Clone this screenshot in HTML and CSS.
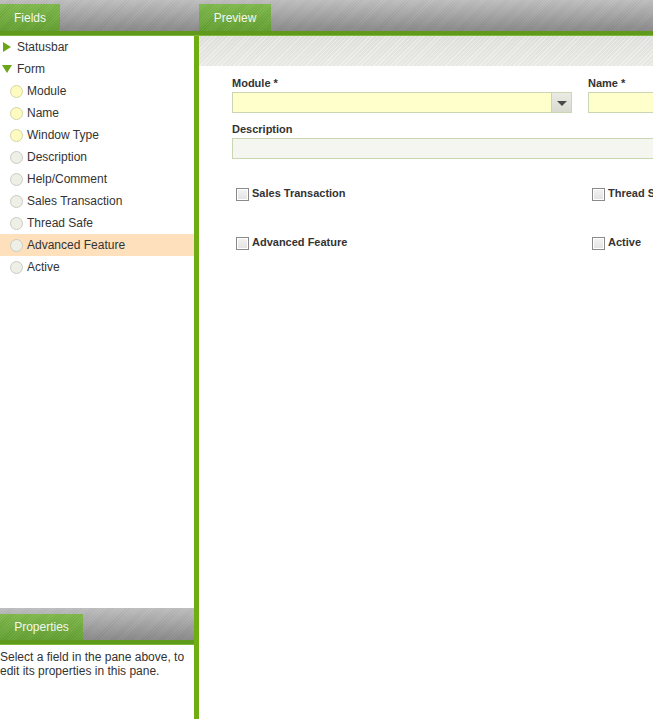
FILE: index.html
```html
<!DOCTYPE html>
<html lang="en">
<head>
    <meta charset="UTF-8">
    <title>Window Designer</title>
    <link rel="stylesheet" href="styles.css">
</head>
<body>
    <div class="topbar">
        <div class="tab tab-fields">Fields</div>
        <div class="tab tab-preview">Preview</div>
    </div>
    <div class="greenline"></div>

    <div class="main">
        <div class="left">
            <ul class="tree">
                <li class="node"><span class="arrow arrow-r"></span>Statusbar</li>
                <li class="node"><span class="arrow arrow-d"></span>Form</li>
                <li class="leaf"><span class="dot req"></span>Module</li>
                <li class="leaf"><span class="dot req"></span>Name</li>
                <li class="leaf"><span class="dot req"></span>Window Type</li>
                <li class="leaf"><span class="dot"></span>Description</li>
                <li class="leaf"><span class="dot"></span>Help/Comment</li>
                <li class="leaf"><span class="dot"></span>Sales Transaction</li>
                <li class="leaf"><span class="dot"></span>Thread Safe</li>
                <li class="leaf selected"><span class="dot"></span>Advanced Feature</li>
                <li class="leaf"><span class="dot"></span>Active</li>
            </ul>
            <div class="props-bar">
                <div class="tab tab-props">Properties</div>
            </div>
            <div class="props-line"></div>
            <div class="props-body">Select a field in the pane above, to edit its properties in this pane.</div>
        </div>

        <div class="splitter"></div>

        <div class="preview">
            <div class="toolband"></div>
            <div class="form">
                <div class="row">
                    <div class="field col1">
                        <label>Module *</label>
                        <div class="input req combo"><span class="combo-btn"></span></div>
                    </div>
                    <div class="field col2">
                        <label>Name *</label>
                        <div class="input req"></div>
                    </div>
                </div>
                <div class="field wide">
                    <label>Description</label>
                    <div class="input"></div>
                </div>
                <div class="checks">
                    <div class="check"><span class="box"></span>Sales Transaction</div>
                    <div class="check"><span class="box"></span>Thread Safe</div>
                    <div class="check"><span class="box"></span>Advanced Feature</div>
                    <div class="check"><span class="box"></span>Active</div>
                </div>
            </div>
        </div>
    </div>
</body>
</html>
```

FILE: styles.css
```css
html, body { margin: 0; padding: 0; }
body { font-family: "Liberation Sans", Arial, sans-serif; font-size: 12px; color: #333; width: 653px; height: 719px; overflow: hidden; background: #fff; }

.topbar, .props-bar {
    display: flex; align-items: flex-end; height: 31px;
    background: repeating-linear-gradient(135deg, rgba(255,255,255,0.03) 0 1px, rgba(0,0,0,0.03) 1px 2px),
                linear-gradient(#c0c0c0, #8a8a8a);
}
.tab {
    height: 27px; line-height: 28px; color: #f4f8ee; font-size: 12px; text-align: center;
    background: repeating-linear-gradient(135deg, rgba(255,255,255,0.04) 0 1px, rgba(0,0,0,0.04) 1px 2px),
                linear-gradient(#80ba4c, #64a133);
}
.tab-fields { width: 60px; }
.tab-preview { width: 72px; margin-left: 139px; }
.tab-props { width: 83px; height: 26px; line-height: 27px; }

.greenline { height: 4px; background: #5f9a1d; border-bottom: 1px solid #7fb53a; }

.main { display: flex; height: 684px; }
.left { width: 194px; display: flex; flex-direction: column; }
.splitter { width: 5px; background: #70ad10; }
.preview { flex: 1; overflow: hidden; }

.tree { list-style: none; margin: 0; padding: 0; height: 572px; }
.tree li { height: 22px; display: flex; align-items: center; white-space: nowrap; }
.node { padding-left: 3px; }
.leaf { padding-left: 10px; }
.selected { background: #fee0bd; }

.arrow { width: 0; height: 0; flex: none; }
.arrow-r { border-left: 8px solid #6ba619; border-top: 5px solid transparent; border-bottom: 5px solid transparent; margin-right: 6px; }
.arrow-d { border-top: 8px solid #6ba619; border-left: 5px solid transparent; border-right: 5px solid transparent; margin-left: -1px; margin-right: 5px; }

.dot { width: 11px; height: 11px; border-radius: 50%; border: 1px solid #c9ccc0; background: #eef0e8; margin-right: 4px; flex: none; }
.dot.req { background: #fdfbc0; border-color: #d5d5a6; }

.props-bar { height: 32px; }
.props-line { height: 4px; background: #5f9a1d; border-bottom: 1px solid #7fb53a; }
.props-body { padding: 5px 0 0 0; line-height: 14px; font-size: 12px; }

.toolband {
    height: 30px;
    background: repeating-linear-gradient(135deg, rgba(255,255,255,0.35) 0 1px, transparent 1px 3px),
                linear-gradient(#dededa, #e8e9e4);
}

.form { padding: 11px 0 0 33px; }
.row { display: flex; gap: 16px; }
.field label { display: block; font-weight: bold; font-size: 11px; color: #333; height: 15px; line-height: 13px; }
.col1 { width: 340px; flex: none; }
.col2 { width: 200px; flex: none; }
.wide { margin-top: 10px; width: 700px; }
.input { height: 19px; border: 1px solid #c9d6b1; background: #f4f6ef; position: relative; }
.input.req { background: #ffffcc; }
.combo-btn { position: absolute; right: 0; top: 0; width: 19px; height: 19px; border-left: 1px solid #c9d6b1; background: linear-gradient(#eaebe4, #d9dbd1); }
.combo-btn::after { content: ""; position: absolute; left: 5px; top: 8px; border-top: 5px solid #4a4a4a; border-left: 5px solid transparent; border-right: 5px solid transparent; }

.checks { display: grid; grid-template-columns: 356px 200px; row-gap: 36px; margin-top: 28px; padding-left: 4px; }
.check { display: flex; align-items: flex-start; font-weight: bold; font-size: 11px; line-height: 12px; white-space: nowrap; height: 13px; }
.box { width: 11px; height: 11px; border: 1px solid #8a8a8a; background: linear-gradient(#f4f4f4, #e2e2e2); box-shadow: inset 0 0 0 1px #fff; margin-right: 3px; margin-top: 1px; flex: none; }
```
